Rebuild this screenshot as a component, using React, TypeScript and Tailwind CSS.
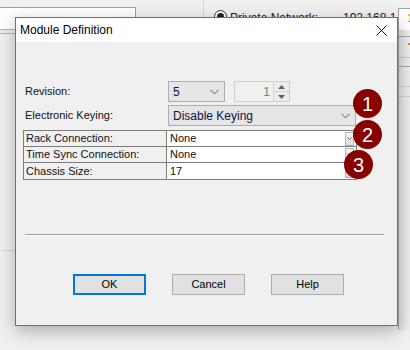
import React from "react";

function Chevron({ className = "" }: { className?: string }) {
  return (
    <svg width="9" height="6" viewBox="0 0 9 6" className={className}>
      <path d="M0.5 0.8 L4.5 4.8 L8.5 0.8" fill="none" stroke="#5a5a5a" strokeWidth="1" />
    </svg>
  );
}

function CellDrop() {
  return (
    <div className="w-[9px] h-[14px] mr-[2px] bg-gradient-to-b from-[#f4f4f4] to-[#dcdcdc] border border-[#b4b4b4] flex items-center justify-center">
      <svg width="5" height="3" viewBox="0 0 5 3">
        <path d="M0.5 0.5 L2.5 2.5 L4.5 0.5" fill="none" stroke="#606060" strokeWidth="1" />
      </svg>
    </div>
  );
}

function Badge({ n, className }: { n: string; className: string }) {
  return (
    <div
      className={`absolute w-[29px] h-[29px] rounded-full bg-[#870000] text-white text-[20px] leading-none flex items-center justify-center ${className}`}
    >
      {n}
    </div>
  );
}

export default function App() {
  const rows = [
    { label: "Rack Connection:", value: "None" },
    { label: "Time Sync Connection:", value: "None" },
    { label: "Chassis Size:", value: "17" },
  ];
  return (
    <div className="relative w-[410px] h-[350px] overflow-hidden bg-[#f0f0f0] font-['Liberation_Sans',Arial,sans-serif] text-black">
      {/* desktop / background window contents */}
      <div className="absolute left-[-1px] top-[7px] w-[137px] h-[23px] bg-white border-t border-r border-[#a0a0a0]" />
      <div className="absolute left-0 top-[29px] w-[20px] h-[5px] border-t border-b border-[#b4b4b4] bg-[#ececec]" />
      <div className="absolute left-0 top-[250px] w-[20px] h-px bg-[#d6d6d6]" />
      <div className="absolute left-[203px] top-0 w-px h-[20px] bg-[#d4d4d4]" />
      <div className="absolute left-[214px] top-[10px] w-[13px] h-[13px] rounded-full border border-[#333] bg-white flex items-center justify-center">
        <div className="w-[7px] h-[7px] rounded-full bg-[#222]" />
      </div>
      <div className="absolute left-[230px] top-[11px] text-[12px] leading-[14px] text-[#222]">Private Network:</div>
      <div className="absolute left-[343px] top-[11px] text-[12px] leading-[14px] text-[#222]">192.168.1</div>
      <div className="absolute left-[398px] top-[8px] w-[20px] h-[22px] bg-white border-l border-t border-[#a0a0a0]">
        <span className="absolute left-[8px] top-[3px] text-[11px] leading-[13px] text-[#e08a1e]">1</span>
      </div>
      <div className="absolute left-[398px] top-[30px] w-[14px] h-[300px] bg-gradient-to-r from-[#e0e0e0] to-[#f2f2f2] border-l border-[#a8a8a8]">
        <div className="h-[7px] border-b border-[#a8a8a8]" />
        <div className="h-[21px] border-b border-[#c8c8c8] relative">
          <span className="absolute left-[9px] top-[6px] w-[3px] h-[2px] bg-[#e08a1e]" />
        </div>
        <div className="h-[9px] border-b border-[#a8a8a8]" />
        <div className="h-[20px] border-b border-[#d0d0d0]" />
        <div className="h-[10px] border-b border-[#d0d0d0]" />
      </div>

      {/* dialog window */}
      <div className="absolute left-[15px] top-[17px] w-[383px] h-[309px] border border-[#707070] bg-[#f0f0f0] flex flex-col shadow-[0_5px_16px_rgba(0,0,0,0.28)]">
        <div className="h-[24px] bg-white flex items-center justify-between pl-[4px] pr-[10px]">
          <span className="text-[12px] leading-[14px] text-black">Module Definition</span>
          <svg width="11" height="11" viewBox="0 0 11 11">
            <path d="M0.5 0.5 L10.5 10.5 M10.5 0.5 L0.5 10.5" stroke="#111" strokeWidth="1" />
          </svg>
        </div>

        <div className="flex-1 flex flex-col pl-[9px] pt-[39px] text-[11px]">
          {/* Revision */}
          <div className="flex items-center h-[21px]">
            <div className="w-[143px] text-[#111]">Revision:</div>
            <div className="w-[57px] h-[21px] bg-[#e5e5e5] border border-[#adadad] flex items-center justify-between pl-[4px] pr-[5px]">
              <span className="text-[12px] text-[#10104a]">5</span>
              <Chevron />
            </div>
            <div className="ml-[9px] w-[56px] h-[21px] border border-[#cccccc] bg-[#f0f0f0] flex">
              <div className="flex-1 flex items-center justify-end pr-[3px] text-[12px] text-[#6a8a6a]">1</div>
              <div className="w-[16px] flex flex-col border-l border-[#d6d6d6]">
                <div className="flex-1 flex items-center justify-center border-b border-[#d6d6d6] bg-[#ececec]">
                  <svg width="7" height="4" viewBox="0 0 7 4">
                    <path d="M0 4 L3.5 0 L7 4 Z" fill="#606060" />
                  </svg>
                </div>
                <div className="flex-1 flex items-center justify-center bg-[#ececec]">
                  <svg width="7" height="4" viewBox="0 0 7 4">
                    <path d="M0 0 L3.5 4 L7 0 Z" fill="#606060" />
                  </svg>
                </div>
              </div>
            </div>
          </div>

          {/* Electronic Keying */}
          <div className="flex items-center h-[21px] mt-[3px]">
            <div className="w-[143px] text-[#111]">Electronic Keying:</div>
            <div className="w-[188px] h-[21px] bg-[#e5e5e5] border border-[#adadad] flex items-center justify-between pl-[4px] pr-[5px]">
              <span className="text-[12px] text-[#10104a]">Disable Keying</span>
              <Chevron />
            </div>
          </div>

          {/* property grid */}
          <div className="mt-[4px] -ml-[2px] w-[334px] border border-[#7c7c7c]">
            {rows.map((r, i) => (
              <div
                key={r.label}
                className={i < 2 ? "flex h-[16px] border-b border-[#7c7c7c]" : "flex h-[16px]"}
              >
                <div className="w-[143px] border-r border-[#7c7c7c] pl-[2px] flex items-center text-[#111]">
                  {r.label}
                </div>
                <div className="flex-1 bg-white pl-[3px] flex items-center justify-between">
                  <span className="text-[#111]">{r.value}</span>
                  <CellDrop />
                </div>
              </div>
            ))}
          </div>

          {/* separator */}
          <div className="mt-[54px] w-[359px] h-[2px] border-t border-[#a0a0a0] border-b border-b-white" />

          {/* buttons */}
          <div className="mt-[38px] ml-[48px] flex gap-[26px]">
            <button className="w-[73px] h-[21px] bg-[#e1e1e1] border-2 border-[#0078d7] text-[11px] text-black flex items-center justify-center">
              OK
            </button>
            <button className="w-[73px] h-[21px] bg-[#e1e1e1] border border-[#adadad] text-[11px] text-black flex items-center justify-center">
              Cancel
            </button>
            <button className="w-[73px] h-[21px] bg-[#e1e1e1] border border-[#adadad] text-[11px] text-black flex items-center justify-center">
              Help
            </button>
          </div>
        </div>
      </div>

      {/* callout badges */}
      <Badge n="1" className="left-[353px] top-[89px]" />
      <Badge n="2" className="left-[353px] top-[120px]" />
      <Badge n="3" className="left-[344px] top-[150px]" />
    </div>
  );
}
